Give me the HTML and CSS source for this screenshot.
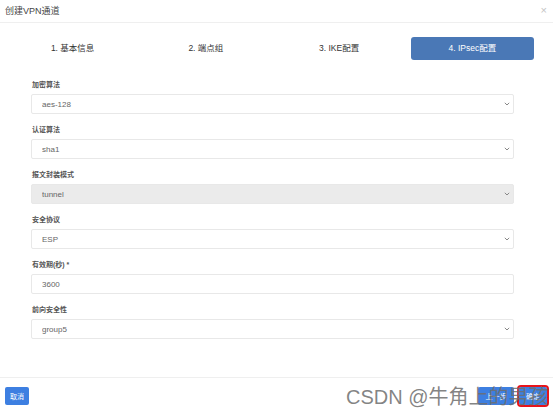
FILE: index.html
```html
<!DOCTYPE html>
<html lang="zh-CN">
<head>
  <meta charset="UTF-8">
  <meta name="viewport" content="width=device-width, initial-scale=1.0">
  <title>创建VPN通道</title>
  <link rel="stylesheet" href="styles.css">
</head>
<body>
  <div class="dialog">
    <!-- Header -->
    <div class="dialog-header">
      <span class="dialog-title">创建VPN通道</span>
      <span class="dialog-close">&times;</span>
    </div>

    <!-- Wizard steps -->
    <div class="steps">
      <div class="step">1. 基本信息</div>
      <div class="step">2. 端点组</div>
      <div class="step">3. IKE配置</div>
      <div class="step active">4. IPsec配置</div>
    </div>

    <!-- IPsec form -->
    <div class="form">
      <div class="form-group">
        <label for="encAlg">加密算法</label>
        <div class="select-wrap">
          <select id="encAlg"><option>aes-128</option></select>
          <svg class="chevron" width="6" height="4" viewBox="0 0 6 4"><path d="M0.8 0.8 L3 3 L5.2 0.8" fill="none" stroke="#888" stroke-width="1"/></svg>
        </div>
      </div>
      <div class="form-group">
        <label for="authAlg">认证算法</label>
        <div class="select-wrap">
          <select id="authAlg"><option>sha1</option></select>
          <svg class="chevron" width="6" height="4" viewBox="0 0 6 4"><path d="M0.8 0.8 L3 3 L5.2 0.8" fill="none" stroke="#888" stroke-width="1"/></svg>
        </div>
      </div>
      <div class="form-group">
        <label for="encapMode">报文封装模式</label>
        <div class="select-wrap">
          <select id="encapMode" disabled><option>tunnel</option></select>
          <svg class="chevron" width="6" height="4" viewBox="0 0 6 4"><path d="M0.8 0.8 L3 3 L5.2 0.8" fill="none" stroke="#888" stroke-width="1"/></svg>
        </div>
      </div>
      <div class="form-group">
        <label for="protocol">安全协议</label>
        <div class="select-wrap">
          <select id="protocol"><option>ESP</option></select>
          <svg class="chevron" width="6" height="4" viewBox="0 0 6 4"><path d="M0.8 0.8 L3 3 L5.2 0.8" fill="none" stroke="#888" stroke-width="1"/></svg>
        </div>
      </div>
      <div class="form-group">
        <label for="lifetime">有效期(秒) *</label>
        <input type="text" id="lifetime" value="3600">
      </div>
      <div class="form-group">
        <label for="pfs">前向安全性</label>
        <div class="select-wrap">
          <select id="pfs"><option>group5</option></select>
          <svg class="chevron" width="6" height="4" viewBox="0 0 6 4"><path d="M0.8 0.8 L3 3 L5.2 0.8" fill="none" stroke="#888" stroke-width="1"/></svg>
        </div>
      </div>
    </div>

    <!-- Footer -->
    <div class="dialog-footer">
      <button class="btn">取消</button>
      <div class="footer-right">
        <button class="btn btn-prev">上一步</button>
        <button class="btn btn-ok">确定</button>
      </div>
      <span class="watermark">CSDN @牛角上的男孩</span>
    </div>
  </div>
</body>
</html>
```

FILE: styles.css
```css
* {
  box-sizing: border-box;
}
body {
  margin: 0;
  font-family: "Liberation Sans", Arial, "Noto Sans CJK SC", sans-serif;
  background-color: #fff;
  color: #333;
}
.dialog {
  width: 553px;
  height: 410px;
  display: flex;
  flex-direction: column;
}
.dialog-header {
  height: 23px;
  padding: 0 6px 2px 5px;
  display: flex;
  align-items: center;
  justify-content: space-between;
  border-bottom: 1px solid #efefef;
}
.dialog-title {
  font-size: 9px;
  color: #444;
}
.dialog-close {
  font-size: 11px;
  color: #c4c4c4;
}
.steps {
  display: grid;
  grid-template-columns: repeat(4, 1fr);
  padding: 14px 14px 0 6px;
}
.step {
  height: 23px;
  line-height: 23px;
  text-align: center;
  font-size: 8.5px;
  color: #333;
}
.step.active {
  margin: 0 5px;
  background-color: #4a78b6;
  color: #fff;
  border-radius: 3px;
}
.form {
  flex: 1;
  padding: 20px 39px 0 31px;
}
.form-group {
  margin-bottom: 11px;
}
.form-group label {
  display: block;
  height: 10px;
  line-height: 10px;
  margin-bottom: 4px;
  padding-left: 1px;
  font-size: 7px;
  font-weight: bold;
  color: #555;
}
.select-wrap {
  position: relative;
}
.form select,
.form input {
  display: block;
  width: 100%;
  height: 20px;
  margin: 0;
  padding: 0 10px;
  font-family: inherit;
  font-size: 8px;
  color: #666;
  background-color: #fff;
  border: 1px solid #e8e8e8;
  border-radius: 2px;
  appearance: none;
  -webkit-appearance: none;
  outline: none;
}
.form select:disabled {
  background-color: #ebebeb;
  color: #666;
  opacity: 1;
}
.chevron {
  position: absolute;
  right: 4px;
  top: 8px;
}
.dialog-footer {
  position: relative;
  height: 33px;
  padding: 9px 6px 0 5px;
  border-top: 1px solid #efefef;
  display: flex;
  align-items: flex-start;
  justify-content: space-between;
}
.footer-right {
  display: flex;
  gap: 5px;
}
.btn {
  height: 18px;
  padding: 0 5px;
  font-family: inherit;
  font-size: 7px;
  color: #fff;
  background-color: #3d7fe1;
  border: none;
  border-radius: 2px;
  cursor: pointer;
}
.btn-prev {
  width: 36px;
}
.btn-ok {
  width: 28px;
  outline: 2px solid #e8141a;
}
.watermark {
  position: absolute;
  left: 346px;
  top: 3px;
  font-size: 20px;
  color: rgba(110, 110, 110, 0.85);
  white-space: nowrap;
  pointer-events: none;
}
```
